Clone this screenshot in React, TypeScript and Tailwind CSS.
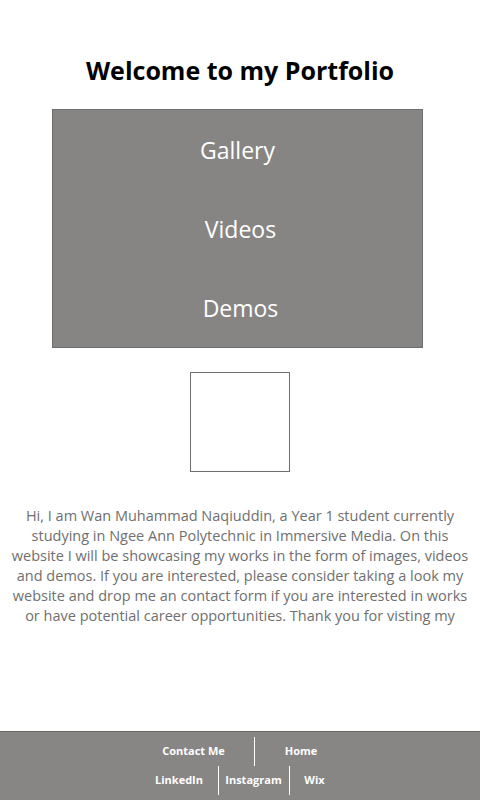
export default function App() {
  const font = { fontFamily: '"Open Sans", "Noto Sans", sans-serif' };
  return (
    <div className="flex min-h-[800px] w-[480px] flex-col bg-white" style={font}>
      <h1 className="mt-[52px] text-center text-[25px] font-bold leading-[36px] text-black">
        Welcome to my Portfolio
      </h1>

      <div className="ml-[52px] mt-[21px] flex h-[239px] w-[371px] flex-col border border-[#6e6e6e] bg-[#878583] text-[23px] text-white">
        <div className="flex h-[80px] items-center justify-center">Gallery</div>
        <div className="flex h-[80px] items-center justify-center pl-[6px]">Videos</div>
        <div className="flex h-[78px] items-center justify-center pl-[6px]">Demos</div>
      </div>

      <div className="mx-auto mt-[24px] h-[100px] w-[100px] border border-[#6e6e6e]" />

      <p className="mt-[34px] whitespace-nowrap text-center text-[14.5px] leading-[20px] text-[#6f6f6f]">
        Hi, I am Wan Muhammad Naqiuddin, a Year 1 student currently
        <br />
        studying in Ngee Ann Polytechnic in Immersive Media. On this
        <br />
        website I will be showcasing my works in the form of images, videos
        <br />
        and demos. If you are interested, please consider taking a look my
        <br />
        website and drop me an contact form if you are interested in works
        <br />
        or have potential career opportunities. Thank you for visting my
      </p>

      <footer className="mt-auto flex h-[69px] flex-col border-t border-[#666] bg-[#888685] pt-[5px] text-[11px] font-bold text-white">
        <div className="flex justify-center">
          <div className="flex h-[29px] w-[122px] items-center justify-center border-r border-white">Contact Me</div>
          <div className="flex h-[29px] w-[92px] items-center justify-center">Home</div>
        </div>
        <div className="flex justify-center">
          <div className="flex h-[29px] w-[78px] items-center justify-center border-r border-white">LinkedIn</div>
          <div className="flex h-[29px] w-[71px] items-center justify-center border-r border-white">Instagram</div>
          <div className="flex h-[29px] w-[50px] items-center justify-center">Wix</div>
        </div>
      </footer>
    </div>
  );
}
